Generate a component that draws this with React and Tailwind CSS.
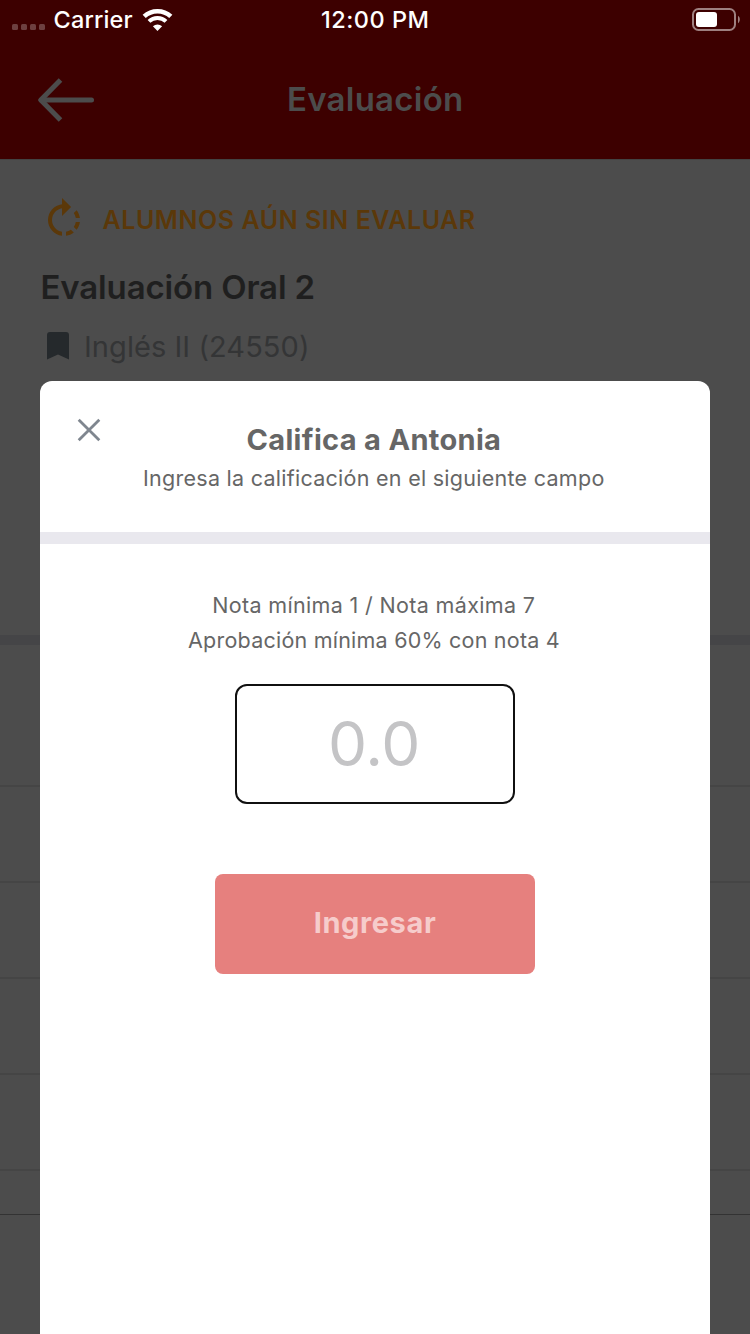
import React from "react";

function SignalDots() {
  return (
    <div className="flex gap-[3px] pt-[14px]">
      {[0, 1, 2, 3].map((i) => (
        <span key={i} className="size-[6px] rounded-[1.5px] bg-white/25" />
      ))}
    </div>
  );
}

function WifiIcon() {
  return (
    <svg className="block h-[24px] w-[32px]" viewBox="0 0 32 24" fill="none" stroke="white">
      <path d="M2.2 8.4a19.6 19.6 0 0 1 26.6 0" strokeWidth="4.6" />
      <path d="M7 13.4a12.4 12.4 0 0 1 17 0" strokeWidth="4" />
      <path d="M10.9 18.3a7 7 0 0 1 9.2 0l-4.6 4.6z" fill="white" stroke="none" />
    </svg>
  );
}

function BatteryIcon() {
  return (
    <svg className="block h-[24px] w-[50px]" viewBox="0 0 50 24" fill="none">
      <rect x="1" y="1" width="42" height="21" rx="5.5" stroke="white" strokeOpacity="0.5" strokeWidth="2" />
      <rect x="4" y="4" width="21" height="15" rx="3" fill="white" />
      <path d="M46 7.8c2.4 1.6 2.4 5.8 0 7.4z" fill="white" fillOpacity="0.5" />
    </svg>
  );
}

function StatusBar() {
  return (
    <div className="absolute inset-x-0 top-0 flex h-[40px] text-[23.5px] font-medium leading-[39px] text-white">
      <div className="flex w-[321px] pl-[12px]">
        <div className="pt-[10px]">
          <SignalDots />
        </div>
        <span className="ml-[8.5px] tracking-[0.15px]">Carrier</span>
        <div className="ml-[9.5px] pt-[8px]">
          <WifiIcon />
        </div>
      </div>
      <span className="tracking-[0.5px]">12:00 PM</span>
      <div className="ml-auto mr-[8px] pt-[8px]">
        <BatteryIcon />
      </div>
    </div>
  );
}

function Header() {
  return (
    <header className="flex h-[160px] items-center border-b border-[#434343] bg-[#3d0000] pt-[39px]">
      <svg className="ml-[36px] block h-[48px] w-[60px]" viewBox="0 0 60 48" fill="none" stroke="#4c4c4c" strokeWidth="5">
        <path d="M24.5 5 4.8 25l19.7 20" strokeLinejoin="round" />
        <path d="M5 25h50.5" strokeLinecap="round" />
      </svg>
      <h1 className="ml-[191px] pb-px text-[33px] font-semibold leading-[40px] tracking-[0.25px] text-[#4c4c4c]">
        Evaluación
      </h1>
    </header>
  );
}

function EvaluationSummary() {
  return (
    <section className="flex h-[485px] flex-col border-b-[10px] border-[#454547] px-[40px] pt-[36px]">
      <div className="flex h-[48px] items-center text-[#5b3809]">
        <svg className="block size-[48px]" viewBox="0 0 24 24" fill="currentColor">
          <path d="M15.55 5.55L11 1v3.07C7.06 4.56 4 7.92 4 12s3.05 7.44 7 7.93v-2.02c-2.84-.48-5-2.94-5-5.91s2.16-5.43 5-5.91V10l4.55-4.45zM19.93 11c-.17-1.39-.72-2.73-1.62-3.89l-1.42 1.42c.54.75.88 1.6 1.02 2.47h2.02zM13 17.9v2.02c1.39-.17 2.74-.71 3.9-1.61l-1.44-1.44c-.75.54-1.59.89-2.46 1.03zm3.89-2.42l1.42 1.41c.9-1.16 1.45-2.5 1.62-3.89h-2.02c-.14.87-.48 1.72-1.02 2.48z" />
        </svg>
        <span className="ml-[14.5px] text-[25px] font-semibold leading-[48px] tracking-[0.55px]">
          ALUMNOS AÚN SIN EVALUAR
        </span>
      </div>
      <h2 className="ml-[0.5px] mt-[23px] text-[33px] font-semibold leading-[40px] tracking-[-0.14px] text-[#1f1f1f]">
        Evaluación Oral 2
      </h2>
      <div className="mt-[19px] flex h-[40px]">
        <svg className="ml-[7px] mt-[6px] block h-[28px] w-[22px]" viewBox="0 0 22 28" fill="#25292c">
          <path d="M3 0h16a3 3 0 0 1 3 3v24.5l-11-5-11 5V3a3 3 0 0 1 3-3z" />
        </svg>
        <span className="ml-[15px] pt-px text-[29px] leading-[40px] tracking-[0.06px] text-[#343536]">
          Inglés II (24550)
        </span>
      </div>
    </section>
  );
}

function StudentRows() {
  return (
    <div className="flex flex-1 flex-col">
      <div className="h-[142px] border-b-2 border-[#454545]" />
      {[0, 1, 2, 3].map((i) => (
        <div key={i} className="h-[96px] border-b-2 border-[#454545]" />
      ))}
      <div className="h-[44px] border-b border-[#333333]" />
    </div>
  );
}

function GradeModal() {
  return (
    <div className="absolute left-[40px] top-[381px] flex h-[953px] w-[670px] flex-col rounded-t-[12px] bg-white text-[#666666]">
      <div className="flex h-[163px] border-b-[12px] border-[#e9e8ee]">
        <svg className="ml-[37px] mt-[37px] block size-[24px]" viewBox="0 0 24 24" fill="none" stroke="#7f868f" strokeWidth="2.8">
          <path d="M1.7 1.7l20.6 20.6M22.3 1.7L1.7 22.3" />
        </svg>
        <div className="ml-[42px] whitespace-nowrap pt-[39px]">
          <h3 className="ml-[103.5px] text-[29px] font-bold leading-[40px] tracking-[0.32px]">
            Califica a Antonia
          </h3>
          <p className="text-[21.5px] leading-[36px] tracking-[0.27px]">
            Ingresa la calificación en el siguiente campo
          </p>
        </div>
      </div>
      <div className="flex flex-col items-center pt-[43px]">
        <p className="pr-[2.5px] text-[21.5px] leading-[36px] tracking-[0.34px]">Nota mínima 1 / Nota máxima 7</p>
        <p className="pr-[2px] text-[21.5px] leading-[35px] tracking-[0.22px]">Aprobación mínima 60% con nota 4</p>
        <div className="mt-[26px] flex h-[120px] w-[280px] justify-center rounded-[12px] border-2 border-[#101010]">
          <span className="pr-[2px] text-[62px] leading-[115px] tracking-[-0.3px] text-[#c4c4c6]">0.0</span>
        </div>
        <button className="mt-[70px] h-[100px] w-[320px] rounded-[8px] bg-[#e6807e] pb-[3px] text-[29px] font-bold tracking-[0.6px] text-[#f6cccb]">
          Ingresar
        </button>
      </div>
    </div>
  );
}

export default function App() {
  return (
    <div className="relative flex h-[1334px] w-[750px] flex-col overflow-hidden bg-[#4c4c4c] font-['Inter',sans-serif]">
      <Header />
      <EvaluationSummary />
      <StudentRows />
      <GradeModal />
      <StatusBar />
    </div>
  );
}
